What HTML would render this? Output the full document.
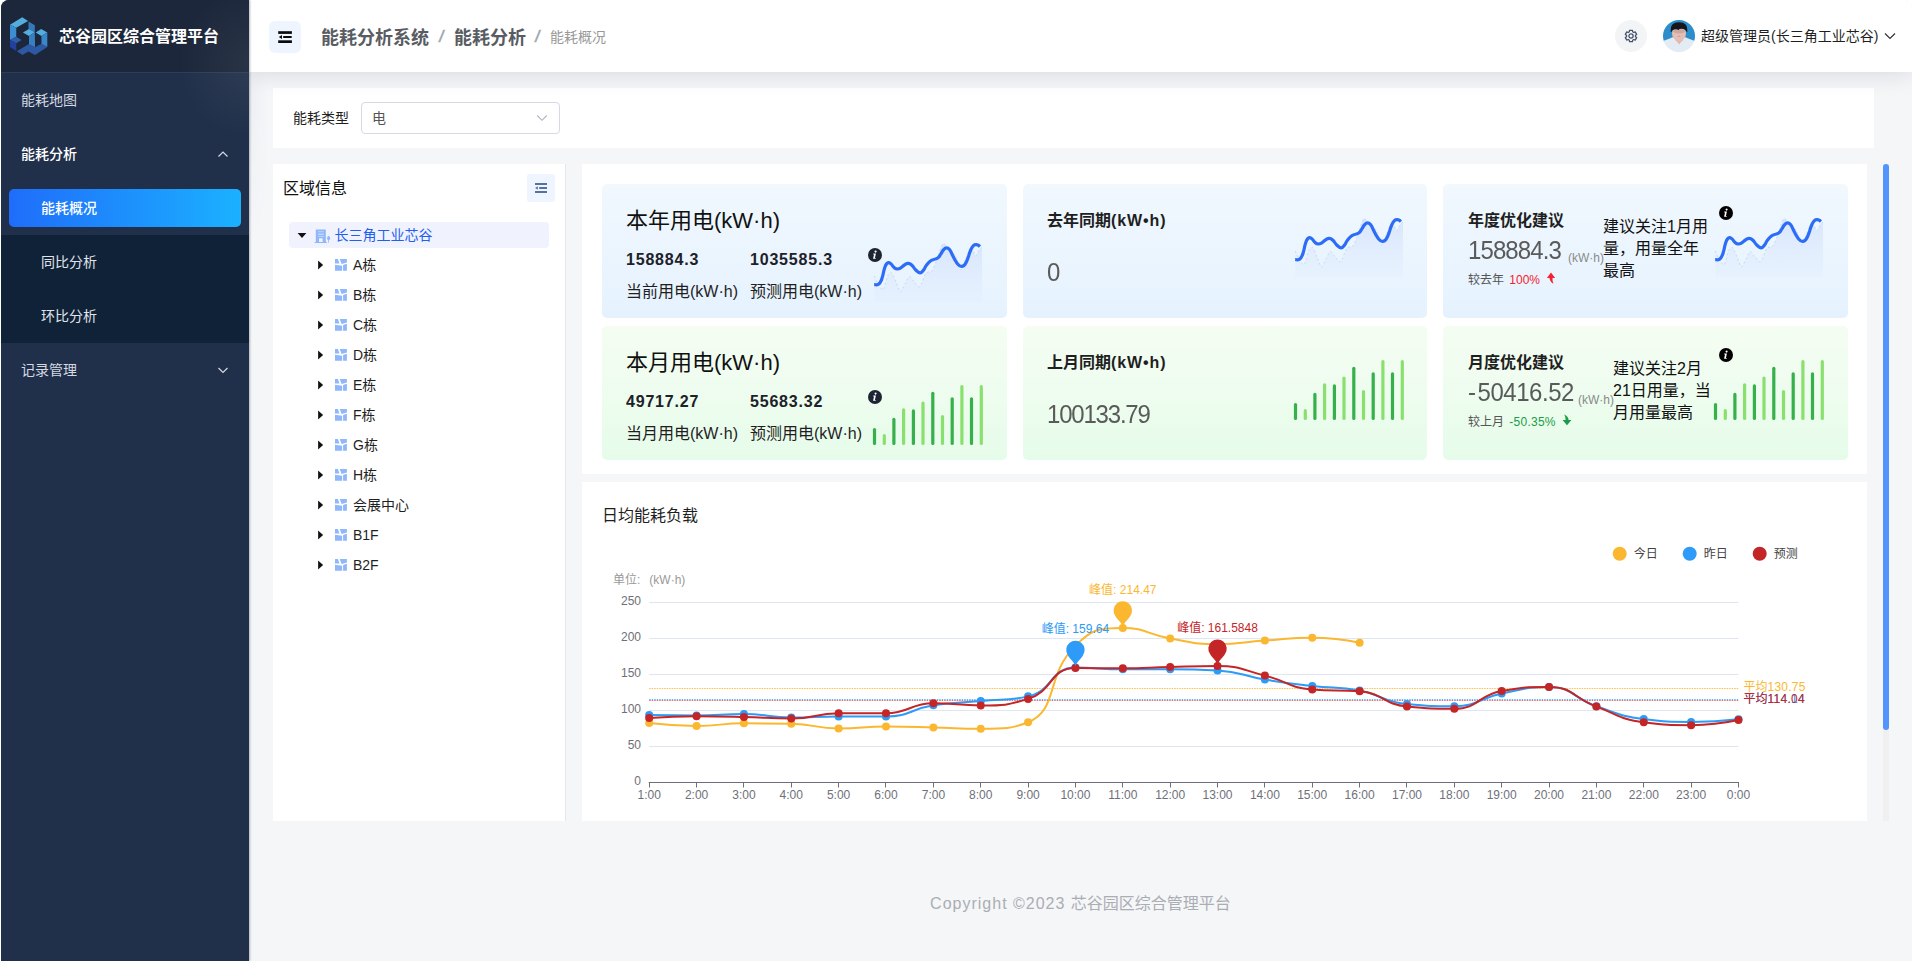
<!DOCTYPE html>
<html lang="zh-CN"><head><meta charset="utf-8"><title>芯谷园区综合管理平台</title>
<style>
*{box-sizing:border-box;margin:0;padding:0}
html,body{width:1912px;height:961px;overflow:hidden;background:#fff}
body{font-family:"Liberation Sans", "Noto Sans CJK SC", sans-serif;font-size:14px;color:#1f1f1f;position:relative}
.abs{position:absolute}
.t{position:absolute;white-space:nowrap;line-height:1}
#app{position:absolute;left:1px;top:0;width:1911px;height:961px;background:#f5f6f8;border-radius:8px 8px 0 0;overflow:hidden}
#side{position:absolute;left:0;top:0;width:248px;height:961px;background:#21304a;box-shadow:1px 0 2px rgba(0,21,41,.3)}
#logo{position:absolute;left:0;top:0;width:248px;height:73px;background:#1c273b;border-bottom:1px solid #2f3c58}
.mi{position:absolute;left:0;width:248px;height:54px;color:#d4d9e2;font-size:14px}
.mi span{position:absolute;top:20px;line-height:14px;white-space:nowrap}
#head{position:absolute;left:248px;top:0;width:1663px;height:72px;background:#fff;box-shadow:0 2px 22px rgba(0,21,41,.13);z-index:5}
#side{z-index:6}
.panel{position:absolute;background:#fff}

.card{position:absolute;border-radius:5px}
.cb{background:linear-gradient(180deg,#f1f8fe 0%,#e5f2fe 100%)}
.cg{background:linear-gradient(180deg,#f5fdf3 0%,#e6fcea 100%)}
.ct1{font-size:22px;line-height:24px;color:#111}
.ct2{font-size:16px;line-height:18px;font-weight:700;color:#1f1f1f}
.cv{font-size:16px;line-height:18px;font-weight:700;color:#1d2129;letter-spacing:.8px}
.cl{font-size:16px;line-height:18px;color:#1f1f1f}
.big{font-size:24px;line-height:26px;color:#5a5a5a;font-weight:300;letter-spacing:-.9px;transform:scaleY(1.1);transform-origin:0 21.3px}
.unit{font-size:12px;line-height:14px;color:#8a8a8a}
.sm{font-size:12px;line-height:14px;color:#555}
.adv{position:absolute;font-size:16px;line-height:22px;color:#111;white-space:nowrap}

.ax{font-size:12px;fill:#6e7079}
</style></head>
<body>
<div id="app">
<div class="abs" style="left:248px;top:72px;width:18px;height:170px;background:linear-gradient(90deg,rgba(0,50,100,.035),rgba(0,50,100,0));-webkit-mask-image:linear-gradient(180deg,#000 20%,transparent);mask-image:linear-gradient(180deg,#000 20%,transparent)"></div>
<div id="side">
<div id="logo">
<svg class="abs" style="left:3px;top:12px" width="50" height="48" viewBox="0 0 1001 961">
<polygon points="120,255 365,105 482,178 245,315" fill="#52aede"/>
<polygon points="120,255 245,315 245,497 120,562" fill="#3c8ed0"/>
<polygon points="120,560 245,495 352,560 245,627" fill="#2f5cab"/>
<polygon points="120,560 245,625 245,782 120,702" fill="#24409f"/>
<polygon points="490,192 617,265 617,405 500,340 490,335" fill="#3579ba"/>
<polygon points="378,410 500,338 617,405 500,482" fill="#52aede"/>
<polygon points="500,480 617,403 622,705 500,650" fill="#3680c2"/>
<polygon points="633,410 745,338 867,410 750,482" fill="#52aede"/>
<polygon points="750,480 867,410 867,702 750,640" fill="#3a86c8"/>
<polygon points="258,785 490,648 622,705 750,635 867,700 622,862 490,790 370,862" fill="#2d58a4"/>
</svg>
<div class="t" style="left:58px;top:28px;font-size:16px;line-height:18px;font-weight:700;color:#fff">芯谷园区综合管理平台</div>
</div>
<div class="abs" style="left:0;top:0;width:248px;height:200px;background:radial-gradient(ellipse 70px 75px at 100% 62px,rgba(255,255,255,.06),rgba(255,255,255,0));pointer-events:none"></div>
<div class="mi" style="top:73px"><span style="left:20px">能耗地图</span></div>
<div class="mi" style="top:127px;color:#fff;font-weight:500"><span style="left:20px">能耗分析</span><svg class="abs" style="left:216px;top:22px" width="12" height="10" viewBox="0 0 12 10"><path d="M1.5 7.5 L6 3 L10.5 7.5" fill="none" stroke="#d4d9e2" stroke-width="1.2"/></svg></div>
<div class="abs" style="left:0;top:235px;width:248px;height:108px;background:#0f2238"></div>
<div class="abs" style="left:8px;top:189px;width:232px;height:38px;border-radius:5px;background:linear-gradient(90deg,#1f6dfa,#1bb1ff)"></div>
<div class="mi" style="top:181px;color:#fff;font-weight:500"><span style="left:40px">能耗概况</span></div>
<div class="mi" style="top:235px;color:#e0e4ea"><span style="left:40px">同比分析</span></div>
<div class="mi" style="top:289px;color:#e0e4ea"><span style="left:40px">环比分析</span></div>
<div class="mi" style="top:343px"><span style="left:20px">记录管理</span><svg class="abs" style="left:216px;top:22px" width="12" height="10" viewBox="0 0 12 10"><path d="M1.5 3 L6 7.5 L10.5 3" fill="none" stroke="#d4d9e2" stroke-width="1.2"/></svg></div>
</div>
<div id="head">
<div class="abs" style="left:20px;top:21px;width:32px;height:32px;border-radius:6px;background:#eef5fe"></div>
<svg class="abs" style="left:28px;top:29px" width="16" height="16" viewBox="0 0 16 16">
<rect x="1.2" y="2.2" width="13.7" height="2.7" fill="#0a0a0a"/><rect x="6.1" y="7" width="8.6" height="1.9" rx=".5" fill="#0a0a0a"/><rect x="1.2" y="11.3" width="13.7" height="2.7" fill="#0a0a0a"/><polygon points="1.8,7.9 5,5.9 5,9.9" fill="#0a0a0a"/></svg>
<div class="t" style="left:72px;top:27.7px;font-size:18px;line-height:20px;font-weight:700;color:#595c63">能耗分析系统</div>
<div class="t" style="left:189.5px;top:27px;font-size:17px;line-height:20px;font-weight:700;color:#a3a9b4;transform:skewX(-12deg)">/</div>
<div class="t" style="left:205px;top:27.7px;font-size:18px;line-height:20px;font-weight:700;color:#595c63">能耗分析</div>
<div class="t" style="left:286px;top:27px;font-size:17px;line-height:20px;font-weight:700;color:#a3a9b4;transform:skewX(-12deg)">/</div>
<div class="t" style="left:301px;top:28.6px;font-size:14px;line-height:16px;color:#999">能耗概况</div>
<div class="abs" style="left:1366px;top:20px;width:32px;height:32px;border-radius:16px;background:#f3f4f6"></div>
<svg class="abs" style="left:1374px;top:28px" width="16" height="16" viewBox="0 0 16 16">
<path d="M6.39 3.80 L6.53 2.29 L9.47 2.29 L9.61 3.80 L10.83 4.50 L12.22 3.87 L13.68 6.41 L12.44 7.30 L12.44 8.70 L13.68 9.59 L12.22 12.13 L10.83 11.50 L9.61 12.20 L9.47 13.71 L6.53 13.71 L6.39 12.20 L5.17 11.50 L3.78 12.13 L2.32 9.59 L3.56 8.70 L3.56 7.30 L2.32 6.41 L3.78 3.87 L5.17 4.50Z" fill="none" stroke="#44526a" stroke-width="1.25" stroke-linejoin="round"/>
<circle cx="8" cy="8" r="2.1" fill="none" stroke="#44526a" stroke-width="1.25"/></svg>
<svg class="abs" style="left:1414px;top:20px;border-radius:50%;overflow:hidden" width="32" height="32" viewBox="0 0 32 32">
<defs><filter id="bl" x="-20%" y="-20%" width="140%" height="140%"><feGaussianBlur stdDeviation=".55"/></filter></defs>
<g><rect width="32" height="22" fill="#2b8ecb"/><rect y="21" width="32" height="11" fill="#e3ecf5"/>
<path d="M-2 34 L-2 21.5 Q5 19.5 10.2 17 L16.3 24.6 L21.8 17 Q27 19.5 34 21.5 L34 34z" fill="#e3ecf5"/>
<g filter="url(#bl)">
<path d="M10.4 17.2 L16.3 24.4 L21.6 17.2 L21.6 14 L10.4 14z" fill="#e2b9a6"/>
<ellipse cx="16" cy="13.6" rx="7" ry="7.3" fill="#e6beb3"/>
<ellipse cx="16" cy="11.2" rx="6" ry="2.2" fill="#b9948d" opacity=".55"/>
<ellipse cx="16" cy="16.4" rx="1.6" ry=".7" fill="#d8949a" opacity=".8"/>
<path d="M7.6 11.5 Q6.8 2.3 16 2.3 Q25.2 2.3 24.4 11.5 Q23.5 12.6 22.9 10.4 Q21 8.2 16.4 9 L15.6 10 Q13 8.3 9.4 10.2 Q8.4 12.8 7.6 11.5z" fill="#15151d"/>
</g></g></svg>
<div class="t" style="left:1452px;top:28px;font-size:14px;line-height:16px;color:#1f1f1f">超级管理员(长三角工业芯谷)</div>
<svg class="abs" style="left:1634px;top:31px" width="14" height="10" viewBox="0 0 14 10"><path d="M2 2.5 L7 7.5 L12 2.5" fill="none" stroke="#333" stroke-width="1.2"/></svg>
</div>
<div class="panel" style="left:272px;top:88px;width:1601px;height:60px">
<div class="t" style="left:20px;top:22px;font-size:14px;line-height:16px;color:#1f1f1f">能耗类型</div>
<div class="abs" style="left:88px;top:14px;width:199px;height:32px;border:1px solid #d5d9e6;border-radius:4px;background:#fff"></div>
<div class="t" style="left:99px;top:22px;font-size:14px;line-height:16px;color:#555">电</div>
<svg class="abs" style="left:263px;top:25px" width="12" height="10" viewBox="0 0 12 10"><path d="M1.2 2.5 L6 7.3 L10.8 2.5" fill="none" stroke="#b0b4bd" stroke-width="1.1"/></svg>
</div>
<div class="panel" style="left:272px;top:164px;width:293px;height:657px;border-right:1px solid #e6e7ea">
<div class="t" style="left:10px;top:16px;font-size:16px;line-height:18px;color:#111">区域信息</div>
<div class="abs" style="left:254px;top:10px;width:28px;height:28px;border-radius:3px;background:#eff5fe"></div>
<svg class="abs" style="left:261px;top:17px" width="14" height="14" viewBox="0 0 14 14">
<rect x="1" y="2" width="12" height="2" fill="#56709f"/><rect x="5.2" y="6" width="7.8" height="2" fill="#56709f"/><rect x="1" y="10" width="12" height="2" fill="#56709f"/><polygon points="1.1,7 3.8,5.2 3.8,8.8" fill="#56709f"/></svg>
<div class="abs" style="left:16px;top:58px;width:260px;height:26px;border-radius:4px;background:#f0f2fe"></div>
<svg class="abs" style="left:24px;top:67px" width="10" height="8" viewBox="0 0 10 8"><polygon points="0.6,2.1 9.4,2.1 5,7.1" fill="#111"/></svg>
<svg class="abs" style="left:40.1px;top:63.5px" width="18" height="18" viewBox="0 0 18 18">
<path d="M2.8 1.9 q0 -.5 .5 -.5 h9 q.5 0 .5 .5 v12.1 h1.1 v.9 h-12.2 v-.9 h1.1z" fill="#8fb7f9"/>
<rect x="5" y="3.3" width="5.8" height=".9" fill="#c4d8fc"/><rect x="5" y="5.7" width="5.8" height=".9" fill="#dfe9fe"/><rect x="5" y="7.9" width="5.8" height=".9" fill="#c4d8fc"/><rect x="6" y="10.3" width="3.6" height="3.7" rx=".5" fill="#f0f2fe"/>
<ellipse cx="15.6" cy="10.2" rx="1.5" ry="2.1" fill="#8fb7f9"/><rect x="15.25" y="10" width=".75" height="4.8" fill="#8fb7f9"/></svg>
<div class="t" style="left:61.5px;top:63px;font-size:14px;line-height:16px;color:#1f5fee">长三角工业芯谷</div>
<svg class="abs" style="left:45px;top:96px" width="8" height="10" viewBox="0 0 8 10"><polygon points="0.1,0.5 5.1,5 0.1,9.5" fill="#111"/></svg>
<svg class="abs" style="left:62px;top:95px" width="12" height="12" viewBox="0 0 12 12">
<path d="M0 0 H2.9 L4.5 4.4 H0z M4.7 0 H11.9 V3.6 L6.6 4.9z M0 5.8 L7.1 6.8 V11.8 H0z M8.1 6 L11.9 4.8 V11.8 H8.1z" fill="#8fb7f9"/></svg>
<div class="t" style="left:80px;top:93px;font-size:14px;line-height:16px;color:#1f1f1f">A栋</div>
<svg class="abs" style="left:45px;top:126px" width="8" height="10" viewBox="0 0 8 10"><polygon points="0.1,0.5 5.1,5 0.1,9.5" fill="#111"/></svg>
<svg class="abs" style="left:62px;top:125px" width="12" height="12" viewBox="0 0 12 12">
<path d="M0 0 H2.9 L4.5 4.4 H0z M4.7 0 H11.9 V3.6 L6.6 4.9z M0 5.8 L7.1 6.8 V11.8 H0z M8.1 6 L11.9 4.8 V11.8 H8.1z" fill="#8fb7f9"/></svg>
<div class="t" style="left:80px;top:123px;font-size:14px;line-height:16px;color:#1f1f1f">B栋</div>
<svg class="abs" style="left:45px;top:156px" width="8" height="10" viewBox="0 0 8 10"><polygon points="0.1,0.5 5.1,5 0.1,9.5" fill="#111"/></svg>
<svg class="abs" style="left:62px;top:155px" width="12" height="12" viewBox="0 0 12 12">
<path d="M0 0 H2.9 L4.5 4.4 H0z M4.7 0 H11.9 V3.6 L6.6 4.9z M0 5.8 L7.1 6.8 V11.8 H0z M8.1 6 L11.9 4.8 V11.8 H8.1z" fill="#8fb7f9"/></svg>
<div class="t" style="left:80px;top:153px;font-size:14px;line-height:16px;color:#1f1f1f">C栋</div>
<svg class="abs" style="left:45px;top:186px" width="8" height="10" viewBox="0 0 8 10"><polygon points="0.1,0.5 5.1,5 0.1,9.5" fill="#111"/></svg>
<svg class="abs" style="left:62px;top:185px" width="12" height="12" viewBox="0 0 12 12">
<path d="M0 0 H2.9 L4.5 4.4 H0z M4.7 0 H11.9 V3.6 L6.6 4.9z M0 5.8 L7.1 6.8 V11.8 H0z M8.1 6 L11.9 4.8 V11.8 H8.1z" fill="#8fb7f9"/></svg>
<div class="t" style="left:80px;top:183px;font-size:14px;line-height:16px;color:#1f1f1f">D栋</div>
<svg class="abs" style="left:45px;top:216px" width="8" height="10" viewBox="0 0 8 10"><polygon points="0.1,0.5 5.1,5 0.1,9.5" fill="#111"/></svg>
<svg class="abs" style="left:62px;top:215px" width="12" height="12" viewBox="0 0 12 12">
<path d="M0 0 H2.9 L4.5 4.4 H0z M4.7 0 H11.9 V3.6 L6.6 4.9z M0 5.8 L7.1 6.8 V11.8 H0z M8.1 6 L11.9 4.8 V11.8 H8.1z" fill="#8fb7f9"/></svg>
<div class="t" style="left:80px;top:213px;font-size:14px;line-height:16px;color:#1f1f1f">E栋</div>
<svg class="abs" style="left:45px;top:246px" width="8" height="10" viewBox="0 0 8 10"><polygon points="0.1,0.5 5.1,5 0.1,9.5" fill="#111"/></svg>
<svg class="abs" style="left:62px;top:245px" width="12" height="12" viewBox="0 0 12 12">
<path d="M0 0 H2.9 L4.5 4.4 H0z M4.7 0 H11.9 V3.6 L6.6 4.9z M0 5.8 L7.1 6.8 V11.8 H0z M8.1 6 L11.9 4.8 V11.8 H8.1z" fill="#8fb7f9"/></svg>
<div class="t" style="left:80px;top:243px;font-size:14px;line-height:16px;color:#1f1f1f">F栋</div>
<svg class="abs" style="left:45px;top:276px" width="8" height="10" viewBox="0 0 8 10"><polygon points="0.1,0.5 5.1,5 0.1,9.5" fill="#111"/></svg>
<svg class="abs" style="left:62px;top:275px" width="12" height="12" viewBox="0 0 12 12">
<path d="M0 0 H2.9 L4.5 4.4 H0z M4.7 0 H11.9 V3.6 L6.6 4.9z M0 5.8 L7.1 6.8 V11.8 H0z M8.1 6 L11.9 4.8 V11.8 H8.1z" fill="#8fb7f9"/></svg>
<div class="t" style="left:80px;top:273px;font-size:14px;line-height:16px;color:#1f1f1f">G栋</div>
<svg class="abs" style="left:45px;top:306px" width="8" height="10" viewBox="0 0 8 10"><polygon points="0.1,0.5 5.1,5 0.1,9.5" fill="#111"/></svg>
<svg class="abs" style="left:62px;top:305px" width="12" height="12" viewBox="0 0 12 12">
<path d="M0 0 H2.9 L4.5 4.4 H0z M4.7 0 H11.9 V3.6 L6.6 4.9z M0 5.8 L7.1 6.8 V11.8 H0z M8.1 6 L11.9 4.8 V11.8 H8.1z" fill="#8fb7f9"/></svg>
<div class="t" style="left:80px;top:303px;font-size:14px;line-height:16px;color:#1f1f1f">H栋</div>
<svg class="abs" style="left:45px;top:336px" width="8" height="10" viewBox="0 0 8 10"><polygon points="0.1,0.5 5.1,5 0.1,9.5" fill="#111"/></svg>
<svg class="abs" style="left:62px;top:335px" width="12" height="12" viewBox="0 0 12 12">
<path d="M0 0 H2.9 L4.5 4.4 H0z M4.7 0 H11.9 V3.6 L6.6 4.9z M0 5.8 L7.1 6.8 V11.8 H0z M8.1 6 L11.9 4.8 V11.8 H8.1z" fill="#8fb7f9"/></svg>
<div class="t" style="left:80px;top:333px;font-size:14px;line-height:16px;color:#1f1f1f">会展中心</div>
<svg class="abs" style="left:45px;top:366px" width="8" height="10" viewBox="0 0 8 10"><polygon points="0.1,0.5 5.1,5 0.1,9.5" fill="#111"/></svg>
<svg class="abs" style="left:62px;top:365px" width="12" height="12" viewBox="0 0 12 12">
<path d="M0 0 H2.9 L4.5 4.4 H0z M4.7 0 H11.9 V3.6 L6.6 4.9z M0 5.8 L7.1 6.8 V11.8 H0z M8.1 6 L11.9 4.8 V11.8 H8.1z" fill="#8fb7f9"/></svg>
<div class="t" style="left:80px;top:363px;font-size:14px;line-height:16px;color:#1f1f1f">B1F</div>
<svg class="abs" style="left:45px;top:396px" width="8" height="10" viewBox="0 0 8 10"><polygon points="0.1,0.5 5.1,5 0.1,9.5" fill="#111"/></svg>
<svg class="abs" style="left:62px;top:395px" width="12" height="12" viewBox="0 0 12 12">
<path d="M0 0 H2.9 L4.5 4.4 H0z M4.7 0 H11.9 V3.6 L6.6 4.9z M0 5.8 L7.1 6.8 V11.8 H0z M8.1 6 L11.9 4.8 V11.8 H8.1z" fill="#8fb7f9"/></svg>
<div class="t" style="left:80px;top:393px;font-size:14px;line-height:16px;color:#1f1f1f">B2F</div>
</div>
<div class="panel" style="left:581px;top:164px;width:1285px;height:310px"></div>
<div class="card cb" style="left:601.00px;top:184px;width:404.67px;height:134px"></div>
<div class="card cb" style="left:1021.67px;top:184px;width:404.67px;height:134px"></div>
<div class="card cb" style="left:1442.33px;top:184px;width:404.67px;height:134px"></div>
<div class="card cg" style="left:601.00px;top:326px;width:404.67px;height:134px"></div>
<div class="card cg" style="left:1021.67px;top:326px;width:404.67px;height:134px"></div>
<div class="card cg" style="left:1442.33px;top:326px;width:404.67px;height:134px"></div>
<div class="t ct1" style="left:625px;top:209px">本年用电(kW·h)</div>
<div class="t cv" style="left:625px;top:251px">158884.3</div>
<div class="t cv" style="left:749px;top:251px">1035585.3</div>
<div class="t cl" style="left:625px;top:283px">当前用电(kW·h)</div>
<div class="t cl" style="left:749px;top:283px">预测用电(kW·h)</div>
<svg class="abs" style="left:866.0px;top:247.0px" width="16" height="16" viewBox="0 0 16 16"><circle cx="8" cy="8" r="7" fill="#1d2433"/><path d="M8.6 3.6 a1 1 0 1 1 -.01 0z M6.3 6.6 h2.6 l-1 4.3 h.9 l-.15 .8 h-2.6 l1 -4.3 h-.9z" fill="#fff"/></svg>
<div class="t ct1" style="left:625px;top:351px">本月用电(kW·h)</div>
<div class="t cv" style="left:625px;top:393px">49717.27</div>
<div class="t cv" style="left:749px;top:393px">55683.32</div>
<div class="t cl" style="left:625px;top:425px">当月用电(kW·h)</div>
<div class="t cl" style="left:749px;top:425px">预测用电(kW·h)</div>
<svg class="abs" style="left:866.0px;top:389.0px" width="16" height="16" viewBox="0 0 16 16"><circle cx="8" cy="8" r="7" fill="#1d2433"/><path d="M8.6 3.6 a1 1 0 1 1 -.01 0z M6.3 6.6 h2.6 l-1 4.3 h.9 l-.15 .8 h-2.6 l1 -4.3 h-.9z" fill="#fff"/></svg>
<svg class="abs" style="left:867.0px;top:236.0px" width="120" height="70" viewBox="868 236 120 70"><defs><linearGradient id="g1" x1="0" y1="0" x2="0" y2="1"><stop offset="0" stop-color="#cfe0fc" stop-opacity=".75"/><stop offset="1" stop-color="#dfeafe" stop-opacity=".25"/></linearGradient></defs><path d="M874.30 276.00 C875.10 277.75 876.49 281.38 877.50 283.00 C878.67 284.88 882.05 290.72 883.00 290.00 C884.68 288.72 886.33 278.44 888.00 275.00 C888.45 274.06 890.92 271.99 891.50 272.50 C892.92 273.74 894.90 279.61 896.00 282.00 C897.15 284.49 899.28 291.73 900.50 292.00 C901.53 292.23 903.85 285.98 905.00 284.00 C906.10 282.11 908.26 276.78 909.50 276.50 C910.51 276.28 912.78 280.72 914.00 282.00 C915.28 283.34 918.52 287.73 919.50 287.00 C921.52 285.48 923.78 275.84 926.00 273.00 C926.91 271.84 931.02 272.08 932.00 271.00 C933.52 269.33 935.09 264.29 936.00 262.00 C937.84 257.41 940.76 246.11 943.00 243.50 C943.76 242.61 946.79 246.84 948.00 248.00 C949.79 249.71 953.80 252.90 955.00 255.00 C956.93 258.40 958.99 269.59 960.50 270.00 C961.74 270.34 964.58 260.98 966.00 258.00 C967.33 255.23 970.18 247.28 971.50 247.00 C972.56 246.78 974.40 255.56 975.50 256.00 C976.28 256.31 977.99 251.40 979.00 250.00 C979.62 249.15 981.25 247.75 982.00 247.00 L982 302 L874.3 302 Z" fill="url(#g1)"/><path d="M874.30 276.00 C875.10 277.75 876.49 281.38 877.50 283.00 C878.67 284.88 882.05 290.72 883.00 290.00 C884.68 288.72 886.33 278.44 888.00 275.00 C888.45 274.06 890.92 271.99 891.50 272.50 C892.92 273.74 894.90 279.61 896.00 282.00 C897.15 284.49 899.28 291.73 900.50 292.00 C901.53 292.23 903.85 285.98 905.00 284.00 C906.10 282.11 908.26 276.78 909.50 276.50 C910.51 276.28 912.78 280.72 914.00 282.00 C915.28 283.34 918.52 287.73 919.50 287.00 C921.52 285.48 923.78 275.84 926.00 273.00 C926.91 271.84 931.02 272.08 932.00 271.00 C933.52 269.33 935.09 264.29 936.00 262.00 C937.84 257.41 940.76 246.11 943.00 243.50 C943.76 242.61 946.79 246.84 948.00 248.00 C949.79 249.71 953.80 252.90 955.00 255.00 C956.93 258.40 958.99 269.59 960.50 270.00 C961.74 270.34 964.58 260.98 966.00 258.00 C967.33 255.23 970.18 247.28 971.50 247.00 C972.56 246.78 974.40 255.56 975.50 256.00 C976.28 256.31 977.99 251.40 979.00 250.00 C979.62 249.15 981.25 247.75 982.00 247.00" fill="none" stroke="#c4d8fb" stroke-width="1" stroke-dasharray="2 2.5"/><path d="M874.15 284.54 C876.02 284.54 876.29 285.18 877.90 284.54 C879.42 283.93 879.53 283.54 880.40 282.04 C881.82 279.58 881.64 279.40 882.48 276.63 C883.72 272.53 883.25 272.37 884.56 268.30 C885.33 265.92 885.22 265.65 886.64 263.72 C887.30 262.82 887.71 262.55 888.73 262.64 C890.00 262.76 890.15 263.18 891.22 264.14 C892.85 265.60 892.46 266.08 894.14 267.47 C895.38 268.50 895.53 268.87 897.05 268.97 C898.86 269.08 899.13 268.82 900.80 267.89 C903.08 266.61 902.71 265.92 904.96 264.55 C906.46 263.63 906.66 263.21 908.29 263.31 C909.99 263.42 910.26 263.76 911.62 264.97 C914.01 267.09 913.45 267.75 915.79 269.97 C917.61 271.70 917.89 272.77 919.95 272.88 C921.64 272.97 921.96 271.95 923.28 270.38 C925.29 267.99 924.67 267.45 926.61 264.97 C928.41 262.67 928.41 262.46 930.77 260.81 C932.57 259.55 932.86 260.00 934.94 259.14 C936.40 258.54 936.68 258.89 937.85 257.89 C939.60 256.39 939.41 256.09 940.77 254.15 C942.33 251.93 941.88 251.50 943.68 249.57 C944.79 248.38 945.13 247.90 946.59 247.90 C948.05 247.90 948.48 248.32 949.51 249.57 C951.39 251.86 950.97 252.27 952.42 254.98 C954.09 258.10 953.85 258.25 955.75 261.22 C957.18 263.46 957.10 263.75 959.08 265.39 C960.23 266.34 960.62 266.59 962.00 266.39 C963.54 266.17 963.94 265.90 964.91 264.55 C966.85 261.86 966.55 261.50 967.83 258.31 C969.47 254.22 968.94 253.98 970.74 249.98 C971.85 247.52 971.84 247.22 973.66 245.40 C974.54 244.52 974.90 244.57 976.15 244.57 C977.40 244.57 977.53 244.78 978.65 245.40 C979.40 245.82 979.27 246.03 979.90 246.65" fill="none" stroke="#2d6cf6" stroke-width="3.2" stroke-linecap="butt" stroke-linejoin="round"/></svg>
<svg class="abs" style="left:867.0px;top:380.0px" width="120" height="70" viewBox="868 380 120 70"><line x1="874.5" y1="429.6" x2="874.5" y2="443.4" stroke="#35b04a" stroke-width="3.2" stroke-linecap="round"/><line x1="884.3" y1="435.7" x2="884.3" y2="443.4" stroke="#8ae06e" stroke-width="3.2" stroke-linecap="round"/><line x1="893.9" y1="419.4" x2="893.9" y2="443.4" stroke="#35b04a" stroke-width="3.2" stroke-linecap="round"/><line x1="903.6" y1="409.8" x2="903.6" y2="443.4" stroke="#8ae06e" stroke-width="3.2" stroke-linecap="round"/><line x1="913.4" y1="410.9" x2="913.4" y2="443.4" stroke="#35b04a" stroke-width="3.2" stroke-linecap="round"/><line x1="923.0" y1="403.0" x2="923.0" y2="443.4" stroke="#8ae06e" stroke-width="3.2" stroke-linecap="round"/><line x1="932.8" y1="393.3" x2="932.8" y2="443.4" stroke="#35b04a" stroke-width="3.2" stroke-linecap="round"/><line x1="942.5" y1="416.7" x2="942.5" y2="443.4" stroke="#8ae06e" stroke-width="3.2" stroke-linecap="round"/><line x1="952.2" y1="398.8" x2="952.2" y2="443.4" stroke="#35b04a" stroke-width="3.2" stroke-linecap="round"/><line x1="961.9" y1="386.6" x2="961.9" y2="443.4" stroke="#8ae06e" stroke-width="3.2" stroke-linecap="round"/><line x1="971.5" y1="398.8" x2="971.5" y2="443.4" stroke="#35b04a" stroke-width="3.2" stroke-linecap="round"/><line x1="981.3" y1="386.6" x2="981.3" y2="443.4" stroke="#8ae06e" stroke-width="3.2" stroke-linecap="round"/></svg>
<div class="t ct2" style="left:1046px;top:212px">去年同期<span style="letter-spacing:.9px">(kW•h)</span></div>
<div class="t big" style="left:1046px;top:260px">0</div>
<div class="t ct2" style="left:1046px;top:354px">上月同期<span style="letter-spacing:.9px">(kW•h)</span></div>
<div class="t big" style="left:1046px;top:402px;letter-spacing:-1.2px">100133.79</div>
<svg class="abs" style="left:1288.0px;top:211.0px" width="120" height="70" viewBox="868 236 120 70"><defs><linearGradient id="g2" x1="0" y1="0" x2="0" y2="1"><stop offset="0" stop-color="#cfe0fc" stop-opacity=".75"/><stop offset="1" stop-color="#dfeafe" stop-opacity=".25"/></linearGradient></defs><path d="M874.30 276.00 C875.10 277.75 876.49 281.38 877.50 283.00 C878.67 284.88 882.05 290.72 883.00 290.00 C884.68 288.72 886.33 278.44 888.00 275.00 C888.45 274.06 890.92 271.99 891.50 272.50 C892.92 273.74 894.90 279.61 896.00 282.00 C897.15 284.49 899.28 291.73 900.50 292.00 C901.53 292.23 903.85 285.98 905.00 284.00 C906.10 282.11 908.26 276.78 909.50 276.50 C910.51 276.28 912.78 280.72 914.00 282.00 C915.28 283.34 918.52 287.73 919.50 287.00 C921.52 285.48 923.78 275.84 926.00 273.00 C926.91 271.84 931.02 272.08 932.00 271.00 C933.52 269.33 935.09 264.29 936.00 262.00 C937.84 257.41 940.76 246.11 943.00 243.50 C943.76 242.61 946.79 246.84 948.00 248.00 C949.79 249.71 953.80 252.90 955.00 255.00 C956.93 258.40 958.99 269.59 960.50 270.00 C961.74 270.34 964.58 260.98 966.00 258.00 C967.33 255.23 970.18 247.28 971.50 247.00 C972.56 246.78 974.40 255.56 975.50 256.00 C976.28 256.31 977.99 251.40 979.00 250.00 C979.62 249.15 981.25 247.75 982.00 247.00 L982 302 L874.3 302 Z" fill="url(#g2)"/><path d="M874.30 276.00 C875.10 277.75 876.49 281.38 877.50 283.00 C878.67 284.88 882.05 290.72 883.00 290.00 C884.68 288.72 886.33 278.44 888.00 275.00 C888.45 274.06 890.92 271.99 891.50 272.50 C892.92 273.74 894.90 279.61 896.00 282.00 C897.15 284.49 899.28 291.73 900.50 292.00 C901.53 292.23 903.85 285.98 905.00 284.00 C906.10 282.11 908.26 276.78 909.50 276.50 C910.51 276.28 912.78 280.72 914.00 282.00 C915.28 283.34 918.52 287.73 919.50 287.00 C921.52 285.48 923.78 275.84 926.00 273.00 C926.91 271.84 931.02 272.08 932.00 271.00 C933.52 269.33 935.09 264.29 936.00 262.00 C937.84 257.41 940.76 246.11 943.00 243.50 C943.76 242.61 946.79 246.84 948.00 248.00 C949.79 249.71 953.80 252.90 955.00 255.00 C956.93 258.40 958.99 269.59 960.50 270.00 C961.74 270.34 964.58 260.98 966.00 258.00 C967.33 255.23 970.18 247.28 971.50 247.00 C972.56 246.78 974.40 255.56 975.50 256.00 C976.28 256.31 977.99 251.40 979.00 250.00 C979.62 249.15 981.25 247.75 982.00 247.00" fill="none" stroke="#c4d8fb" stroke-width="1" stroke-dasharray="2 2.5"/><path d="M874.15 284.54 C876.02 284.54 876.29 285.18 877.90 284.54 C879.42 283.93 879.53 283.54 880.40 282.04 C881.82 279.58 881.64 279.40 882.48 276.63 C883.72 272.53 883.25 272.37 884.56 268.30 C885.33 265.92 885.22 265.65 886.64 263.72 C887.30 262.82 887.71 262.55 888.73 262.64 C890.00 262.76 890.15 263.18 891.22 264.14 C892.85 265.60 892.46 266.08 894.14 267.47 C895.38 268.50 895.53 268.87 897.05 268.97 C898.86 269.08 899.13 268.82 900.80 267.89 C903.08 266.61 902.71 265.92 904.96 264.55 C906.46 263.63 906.66 263.21 908.29 263.31 C909.99 263.42 910.26 263.76 911.62 264.97 C914.01 267.09 913.45 267.75 915.79 269.97 C917.61 271.70 917.89 272.77 919.95 272.88 C921.64 272.97 921.96 271.95 923.28 270.38 C925.29 267.99 924.67 267.45 926.61 264.97 C928.41 262.67 928.41 262.46 930.77 260.81 C932.57 259.55 932.86 260.00 934.94 259.14 C936.40 258.54 936.68 258.89 937.85 257.89 C939.60 256.39 939.41 256.09 940.77 254.15 C942.33 251.93 941.88 251.50 943.68 249.57 C944.79 248.38 945.13 247.90 946.59 247.90 C948.05 247.90 948.48 248.32 949.51 249.57 C951.39 251.86 950.97 252.27 952.42 254.98 C954.09 258.10 953.85 258.25 955.75 261.22 C957.18 263.46 957.10 263.75 959.08 265.39 C960.23 266.34 960.62 266.59 962.00 266.39 C963.54 266.17 963.94 265.90 964.91 264.55 C966.85 261.86 966.55 261.50 967.83 258.31 C969.47 254.22 968.94 253.98 970.74 249.98 C971.85 247.52 971.84 247.22 973.66 245.40 C974.54 244.52 974.90 244.57 976.15 244.57 C977.40 244.57 977.53 244.78 978.65 245.40 C979.40 245.82 979.27 246.03 979.90 246.65" fill="none" stroke="#2d6cf6" stroke-width="3.2" stroke-linecap="butt" stroke-linejoin="round"/></svg>
<svg class="abs" style="left:1288.0px;top:355.0px" width="120" height="70" viewBox="868 380 120 70"><line x1="874.5" y1="429.6" x2="874.5" y2="443.4" stroke="#35b04a" stroke-width="3.2" stroke-linecap="round"/><line x1="884.3" y1="435.7" x2="884.3" y2="443.4" stroke="#8ae06e" stroke-width="3.2" stroke-linecap="round"/><line x1="893.9" y1="419.4" x2="893.9" y2="443.4" stroke="#35b04a" stroke-width="3.2" stroke-linecap="round"/><line x1="903.6" y1="409.8" x2="903.6" y2="443.4" stroke="#8ae06e" stroke-width="3.2" stroke-linecap="round"/><line x1="913.4" y1="410.9" x2="913.4" y2="443.4" stroke="#35b04a" stroke-width="3.2" stroke-linecap="round"/><line x1="923.0" y1="403.0" x2="923.0" y2="443.4" stroke="#8ae06e" stroke-width="3.2" stroke-linecap="round"/><line x1="932.8" y1="393.3" x2="932.8" y2="443.4" stroke="#35b04a" stroke-width="3.2" stroke-linecap="round"/><line x1="942.5" y1="416.7" x2="942.5" y2="443.4" stroke="#8ae06e" stroke-width="3.2" stroke-linecap="round"/><line x1="952.2" y1="398.8" x2="952.2" y2="443.4" stroke="#35b04a" stroke-width="3.2" stroke-linecap="round"/><line x1="961.9" y1="386.6" x2="961.9" y2="443.4" stroke="#8ae06e" stroke-width="3.2" stroke-linecap="round"/><line x1="971.5" y1="398.8" x2="971.5" y2="443.4" stroke="#35b04a" stroke-width="3.2" stroke-linecap="round"/><line x1="981.3" y1="386.6" x2="981.3" y2="443.4" stroke="#8ae06e" stroke-width="3.2" stroke-linecap="round"/></svg>
<div class="t ct2" style="left:1467px;top:212px">年度优化建议</div>
<div class="t big" style="left:1467px;top:238px">158884.3</div>
<div class="t unit" style="left:1567px;top:251px">(kW·h)</div>
<div class="t sm" style="left:1467px;top:272.6px">较去年 <span style="color:#f5222d;margin-left:2px">100%</span></div>
<svg class="abs" style="left:1544px;top:271px" width="12" height="13" viewBox="0 0 12 13"><path d="M6 1.5 L10.1 6.9 H7.5 Q7.2 10 8.5 12.8 Q4.8 10.5 4.5 6.9 H1.9z" fill="#f5222d"/></svg>
<div class="adv" style="left:1602px;top:216px">建议关注1月用<br>量，用量全年<br>最高</div>
<svg class="abs" style="left:1717.0px;top:205.0px" width="16" height="16" viewBox="0 0 16 16"><circle cx="8" cy="8" r="7" fill="#000"/><path d="M8.6 3.6 a1 1 0 1 1 -.01 0z M6.3 6.6 h2.6 l-1 4.3 h.9 l-.15 .8 h-2.6 l1 -4.3 h-.9z" fill="#fff"/></svg>
<svg class="abs" style="left:1708.0px;top:211.0px" width="120" height="70" viewBox="868 236 120 70"><defs><linearGradient id="g3" x1="0" y1="0" x2="0" y2="1"><stop offset="0" stop-color="#cfe0fc" stop-opacity=".75"/><stop offset="1" stop-color="#dfeafe" stop-opacity=".25"/></linearGradient></defs><path d="M874.30 276.00 C875.10 277.75 876.49 281.38 877.50 283.00 C878.67 284.88 882.05 290.72 883.00 290.00 C884.68 288.72 886.33 278.44 888.00 275.00 C888.45 274.06 890.92 271.99 891.50 272.50 C892.92 273.74 894.90 279.61 896.00 282.00 C897.15 284.49 899.28 291.73 900.50 292.00 C901.53 292.23 903.85 285.98 905.00 284.00 C906.10 282.11 908.26 276.78 909.50 276.50 C910.51 276.28 912.78 280.72 914.00 282.00 C915.28 283.34 918.52 287.73 919.50 287.00 C921.52 285.48 923.78 275.84 926.00 273.00 C926.91 271.84 931.02 272.08 932.00 271.00 C933.52 269.33 935.09 264.29 936.00 262.00 C937.84 257.41 940.76 246.11 943.00 243.50 C943.76 242.61 946.79 246.84 948.00 248.00 C949.79 249.71 953.80 252.90 955.00 255.00 C956.93 258.40 958.99 269.59 960.50 270.00 C961.74 270.34 964.58 260.98 966.00 258.00 C967.33 255.23 970.18 247.28 971.50 247.00 C972.56 246.78 974.40 255.56 975.50 256.00 C976.28 256.31 977.99 251.40 979.00 250.00 C979.62 249.15 981.25 247.75 982.00 247.00 L982 302 L874.3 302 Z" fill="url(#g3)"/><path d="M874.30 276.00 C875.10 277.75 876.49 281.38 877.50 283.00 C878.67 284.88 882.05 290.72 883.00 290.00 C884.68 288.72 886.33 278.44 888.00 275.00 C888.45 274.06 890.92 271.99 891.50 272.50 C892.92 273.74 894.90 279.61 896.00 282.00 C897.15 284.49 899.28 291.73 900.50 292.00 C901.53 292.23 903.85 285.98 905.00 284.00 C906.10 282.11 908.26 276.78 909.50 276.50 C910.51 276.28 912.78 280.72 914.00 282.00 C915.28 283.34 918.52 287.73 919.50 287.00 C921.52 285.48 923.78 275.84 926.00 273.00 C926.91 271.84 931.02 272.08 932.00 271.00 C933.52 269.33 935.09 264.29 936.00 262.00 C937.84 257.41 940.76 246.11 943.00 243.50 C943.76 242.61 946.79 246.84 948.00 248.00 C949.79 249.71 953.80 252.90 955.00 255.00 C956.93 258.40 958.99 269.59 960.50 270.00 C961.74 270.34 964.58 260.98 966.00 258.00 C967.33 255.23 970.18 247.28 971.50 247.00 C972.56 246.78 974.40 255.56 975.50 256.00 C976.28 256.31 977.99 251.40 979.00 250.00 C979.62 249.15 981.25 247.75 982.00 247.00" fill="none" stroke="#c4d8fb" stroke-width="1" stroke-dasharray="2 2.5"/><path d="M874.15 284.54 C876.02 284.54 876.29 285.18 877.90 284.54 C879.42 283.93 879.53 283.54 880.40 282.04 C881.82 279.58 881.64 279.40 882.48 276.63 C883.72 272.53 883.25 272.37 884.56 268.30 C885.33 265.92 885.22 265.65 886.64 263.72 C887.30 262.82 887.71 262.55 888.73 262.64 C890.00 262.76 890.15 263.18 891.22 264.14 C892.85 265.60 892.46 266.08 894.14 267.47 C895.38 268.50 895.53 268.87 897.05 268.97 C898.86 269.08 899.13 268.82 900.80 267.89 C903.08 266.61 902.71 265.92 904.96 264.55 C906.46 263.63 906.66 263.21 908.29 263.31 C909.99 263.42 910.26 263.76 911.62 264.97 C914.01 267.09 913.45 267.75 915.79 269.97 C917.61 271.70 917.89 272.77 919.95 272.88 C921.64 272.97 921.96 271.95 923.28 270.38 C925.29 267.99 924.67 267.45 926.61 264.97 C928.41 262.67 928.41 262.46 930.77 260.81 C932.57 259.55 932.86 260.00 934.94 259.14 C936.40 258.54 936.68 258.89 937.85 257.89 C939.60 256.39 939.41 256.09 940.77 254.15 C942.33 251.93 941.88 251.50 943.68 249.57 C944.79 248.38 945.13 247.90 946.59 247.90 C948.05 247.90 948.48 248.32 949.51 249.57 C951.39 251.86 950.97 252.27 952.42 254.98 C954.09 258.10 953.85 258.25 955.75 261.22 C957.18 263.46 957.10 263.75 959.08 265.39 C960.23 266.34 960.62 266.59 962.00 266.39 C963.54 266.17 963.94 265.90 964.91 264.55 C966.85 261.86 966.55 261.50 967.83 258.31 C969.47 254.22 968.94 253.98 970.74 249.98 C971.85 247.52 971.84 247.22 973.66 245.40 C974.54 244.52 974.90 244.57 976.15 244.57 C977.40 244.57 977.53 244.78 978.65 245.40 C979.40 245.82 979.27 246.03 979.90 246.65" fill="none" stroke="#2d6cf6" stroke-width="3.2" stroke-linecap="butt" stroke-linejoin="round"/></svg>
<div class="t ct2" style="left:1467px;top:354px">月度优化建议</div>
<div class="t big" style="left:1467px;top:380px;letter-spacing:-.45px"><span style="letter-spacing:1.5px">-</span>50416.52</div>
<div class="t unit" style="left:1577px;top:393px">(kW·h)</div>
<div class="t sm" style="left:1467px;top:414.6px">较上月 <span style="color:#1a9c48;margin-left:2px;letter-spacing:.25px">-50.35%</span></div>
<svg class="abs" style="left:1560px;top:414px" width="12" height="13" viewBox="0 0 12 13"><path d="M6 11.2 L1.6 5.9 H4.6 Q4.8 3 3.2 .5 Q7.3 2.3 7.6 5.9 H10.4z" fill="#1a9c48"/></svg>
<div class="adv" style="left:1612px;top:358px">建议关注2月<br>21日用量，当<br>月用量最高</div>
<svg class="abs" style="left:1717.0px;top:347.0px" width="16" height="16" viewBox="0 0 16 16"><circle cx="8" cy="8" r="7" fill="#000"/><path d="M8.6 3.6 a1 1 0 1 1 -.01 0z M6.3 6.6 h2.6 l-1 4.3 h.9 l-.15 .8 h-2.6 l1 -4.3 h-.9z" fill="#fff"/></svg>
<svg class="abs" style="left:1708.0px;top:355.0px" width="120" height="70" viewBox="868 380 120 70"><line x1="874.5" y1="429.6" x2="874.5" y2="443.4" stroke="#35b04a" stroke-width="3.2" stroke-linecap="round"/><line x1="884.3" y1="435.7" x2="884.3" y2="443.4" stroke="#8ae06e" stroke-width="3.2" stroke-linecap="round"/><line x1="893.9" y1="419.4" x2="893.9" y2="443.4" stroke="#35b04a" stroke-width="3.2" stroke-linecap="round"/><line x1="903.6" y1="409.8" x2="903.6" y2="443.4" stroke="#8ae06e" stroke-width="3.2" stroke-linecap="round"/><line x1="913.4" y1="410.9" x2="913.4" y2="443.4" stroke="#35b04a" stroke-width="3.2" stroke-linecap="round"/><line x1="923.0" y1="403.0" x2="923.0" y2="443.4" stroke="#8ae06e" stroke-width="3.2" stroke-linecap="round"/><line x1="932.8" y1="393.3" x2="932.8" y2="443.4" stroke="#35b04a" stroke-width="3.2" stroke-linecap="round"/><line x1="942.5" y1="416.7" x2="942.5" y2="443.4" stroke="#8ae06e" stroke-width="3.2" stroke-linecap="round"/><line x1="952.2" y1="398.8" x2="952.2" y2="443.4" stroke="#35b04a" stroke-width="3.2" stroke-linecap="round"/><line x1="961.9" y1="386.6" x2="961.9" y2="443.4" stroke="#8ae06e" stroke-width="3.2" stroke-linecap="round"/><line x1="971.5" y1="398.8" x2="971.5" y2="443.4" stroke="#35b04a" stroke-width="3.2" stroke-linecap="round"/><line x1="981.3" y1="386.6" x2="981.3" y2="443.4" stroke="#8ae06e" stroke-width="3.2" stroke-linecap="round"/></svg>
<div class="panel" style="left:581px;top:482px;width:1285px;height:339px"></div>
<div class="t" style="left:601px;top:506.5px;font-size:16px;line-height:18px;color:#1f1f1f">日均能耗负载</div>
<svg class="abs" style="left:0;top:0" width="1911" height="961" viewBox="0 0 1911 961" font-family="'Liberation Sans', 'Noto Sans CJK SC', sans-serif">
<line x1="648.2" y1="746.5" x2="1737.5" y2="746.5" stroke="#e0e6f1" stroke-width="1"/>
<line x1="648.2" y1="710.5" x2="1737.5" y2="710.5" stroke="#e0e6f1" stroke-width="1"/>
<line x1="648.2" y1="674.5" x2="1737.5" y2="674.5" stroke="#e0e6f1" stroke-width="1"/>
<line x1="648.2" y1="638.5" x2="1737.5" y2="638.5" stroke="#e0e6f1" stroke-width="1"/>
<line x1="648.2" y1="602.5" x2="1737.5" y2="602.5" stroke="#e0e6f1" stroke-width="1"/>
<text class="ax" x="640.0" y="785.0" text-anchor="end">0</text>
<text class="ax" x="640.0" y="749.0" text-anchor="end">50</text>
<text class="ax" x="640.0" y="713.0" text-anchor="end">100</text>
<text class="ax" x="640.0" y="677.0" text-anchor="end">150</text>
<text class="ax" x="640.0" y="641.0" text-anchor="end">200</text>
<text class="ax" x="640.0" y="605.0" text-anchor="end">250</text>
<text x="612" y="583.5" font-size="12" fill="#999">单位:<tspan dx="9">(kW·h)</tspan></text>
<line x1="648.2" y1="688.5" x2="1737.5" y2="688.5" stroke="#fbb730" stroke-width="1" stroke-dasharray="1.5 1" opacity=".85"/>
<line x1="648.2" y1="699.5" x2="1737.5" y2="699.5" stroke="#2d9bf7" stroke-width="1" stroke-dasharray="1.5 1" opacity=".7"/>
<line x1="648.2" y1="700.5" x2="1737.5" y2="700.5" stroke="#c42526" stroke-width="1" stroke-dasharray="1.5 1" opacity=".65"/>
<text x="1742.5" y="690.5" font-size="12" fill="#fbb730">平均<tspan letter-spacing=".25">130.75</tspan></text>
<text x="1742.5" y="702.5" font-size="12" fill="#2d9bf7">平均<tspan letter-spacing=".25">114.14</tspan></text>
<text x="1742.5" y="702.5" font-size="12" fill="#c42526">平均<tspan letter-spacing=".25">114.04</tspan></text>
<line x1="647.7" y1="782.5" x2="1738.0" y2="782.5" stroke="#6e7079" stroke-width="1"/>
<line x1="648.5" y1="782.5" x2="648.5" y2="787.5" stroke="#6e7079" stroke-width="1"/>
<text class="ax" x="648.2" y="798.5" text-anchor="middle">1:00</text>
<line x1="695.5" y1="782.5" x2="695.5" y2="787.5" stroke="#6e7079" stroke-width="1"/>
<text class="ax" x="695.6" y="798.5" text-anchor="middle">2:00</text>
<line x1="742.5" y1="782.5" x2="742.5" y2="787.5" stroke="#6e7079" stroke-width="1"/>
<text class="ax" x="742.9" y="798.5" text-anchor="middle">3:00</text>
<line x1="790.5" y1="782.5" x2="790.5" y2="787.5" stroke="#6e7079" stroke-width="1"/>
<text class="ax" x="790.3" y="798.5" text-anchor="middle">4:00</text>
<line x1="837.5" y1="782.5" x2="837.5" y2="787.5" stroke="#6e7079" stroke-width="1"/>
<text class="ax" x="837.6" y="798.5" text-anchor="middle">5:00</text>
<line x1="884.5" y1="782.5" x2="884.5" y2="787.5" stroke="#6e7079" stroke-width="1"/>
<text class="ax" x="885.0" y="798.5" text-anchor="middle">6:00</text>
<line x1="932.5" y1="782.5" x2="932.5" y2="787.5" stroke="#6e7079" stroke-width="1"/>
<text class="ax" x="932.4" y="798.5" text-anchor="middle">7:00</text>
<line x1="979.5" y1="782.5" x2="979.5" y2="787.5" stroke="#6e7079" stroke-width="1"/>
<text class="ax" x="979.7" y="798.5" text-anchor="middle">8:00</text>
<line x1="1027.5" y1="782.5" x2="1027.5" y2="787.5" stroke="#6e7079" stroke-width="1"/>
<text class="ax" x="1027.1" y="798.5" text-anchor="middle">9:00</text>
<line x1="1074.5" y1="782.5" x2="1074.5" y2="787.5" stroke="#6e7079" stroke-width="1"/>
<text class="ax" x="1074.4" y="798.5" text-anchor="middle">10:00</text>
<line x1="1121.5" y1="782.5" x2="1121.5" y2="787.5" stroke="#6e7079" stroke-width="1"/>
<text class="ax" x="1121.8" y="798.5" text-anchor="middle">11:00</text>
<line x1="1169.5" y1="782.5" x2="1169.5" y2="787.5" stroke="#6e7079" stroke-width="1"/>
<text class="ax" x="1169.2" y="798.5" text-anchor="middle">12:00</text>
<line x1="1216.5" y1="782.5" x2="1216.5" y2="787.5" stroke="#6e7079" stroke-width="1"/>
<text class="ax" x="1216.5" y="798.5" text-anchor="middle">13:00</text>
<line x1="1263.5" y1="782.5" x2="1263.5" y2="787.5" stroke="#6e7079" stroke-width="1"/>
<text class="ax" x="1263.9" y="798.5" text-anchor="middle">14:00</text>
<line x1="1311.5" y1="782.5" x2="1311.5" y2="787.5" stroke="#6e7079" stroke-width="1"/>
<text class="ax" x="1311.2" y="798.5" text-anchor="middle">15:00</text>
<line x1="1358.5" y1="782.5" x2="1358.5" y2="787.5" stroke="#6e7079" stroke-width="1"/>
<text class="ax" x="1358.6" y="798.5" text-anchor="middle">16:00</text>
<line x1="1405.5" y1="782.5" x2="1405.5" y2="787.5" stroke="#6e7079" stroke-width="1"/>
<text class="ax" x="1406.0" y="798.5" text-anchor="middle">17:00</text>
<line x1="1453.5" y1="782.5" x2="1453.5" y2="787.5" stroke="#6e7079" stroke-width="1"/>
<text class="ax" x="1453.3" y="798.5" text-anchor="middle">18:00</text>
<line x1="1500.5" y1="782.5" x2="1500.5" y2="787.5" stroke="#6e7079" stroke-width="1"/>
<text class="ax" x="1500.7" y="798.5" text-anchor="middle">19:00</text>
<line x1="1548.5" y1="782.5" x2="1548.5" y2="787.5" stroke="#6e7079" stroke-width="1"/>
<text class="ax" x="1548.0" y="798.5" text-anchor="middle">20:00</text>
<line x1="1595.5" y1="782.5" x2="1595.5" y2="787.5" stroke="#6e7079" stroke-width="1"/>
<text class="ax" x="1595.4" y="798.5" text-anchor="middle">21:00</text>
<line x1="1642.5" y1="782.5" x2="1642.5" y2="787.5" stroke="#6e7079" stroke-width="1"/>
<text class="ax" x="1642.8" y="798.5" text-anchor="middle">22:00</text>
<line x1="1690.5" y1="782.5" x2="1690.5" y2="787.5" stroke="#6e7079" stroke-width="1"/>
<text class="ax" x="1690.1" y="798.5" text-anchor="middle">23:00</text>
<line x1="1737.5" y1="782.5" x2="1737.5" y2="787.5" stroke="#6e7079" stroke-width="1"/>
<text class="ax" x="1737.5" y="798.5" text-anchor="middle">0:00</text>
<path d="M648.20 723.00 C648.20 723.00 671.87 725.88 695.56 725.88 C719.23 725.88 719.22 723.36 742.92 723.36 C766.58 723.36 766.66 723.36 790.28 723.72 C814.02 724.08 813.91 728.40 837.64 728.40 C861.27 728.40 861.31 726.60 885.00 726.60 C908.67 726.60 908.68 726.83 932.36 727.39 C956.04 727.95 956.15 728.83 979.72 728.83 C1003.51 728.83 1010.66 728.83 1027.08 722.28 C1058.02 709.93 1044.09 675.81 1074.44 645.60 C1091.45 628.66 1097.63 627.98 1121.80 627.98 C1144.99 627.98 1145.29 634.32 1169.16 638.40 C1192.65 642.41 1192.79 644.16 1216.52 644.16 C1240.15 644.16 1240.19 642.18 1263.88 640.56 C1287.55 638.94 1287.60 637.68 1311.24 637.68 C1334.96 637.68 1358.60 642.72 1358.60 642.72" fill="none" stroke="#fbb730" stroke-width="2" stroke-linejoin="round"/>
<circle cx="648.20" cy="723.00" r="4" fill="#fbb730"/>
<circle cx="695.56" cy="725.88" r="4" fill="#fbb730"/>
<circle cx="742.92" cy="723.36" r="4" fill="#fbb730"/>
<circle cx="790.28" cy="723.72" r="4" fill="#fbb730"/>
<circle cx="837.64" cy="728.40" r="4" fill="#fbb730"/>
<circle cx="885.00" cy="726.60" r="4" fill="#fbb730"/>
<circle cx="932.36" cy="727.39" r="4" fill="#fbb730"/>
<circle cx="979.72" cy="728.83" r="4" fill="#fbb730"/>
<circle cx="1027.08" cy="722.28" r="4" fill="#fbb730"/>
<circle cx="1074.44" cy="645.60" r="4" fill="#fbb730"/>
<circle cx="1121.80" cy="627.98" r="4" fill="#fbb730"/>
<circle cx="1169.16" cy="638.40" r="4" fill="#fbb730"/>
<circle cx="1216.52" cy="644.16" r="4" fill="#fbb730"/>
<circle cx="1263.88" cy="640.56" r="4" fill="#fbb730"/>
<circle cx="1311.24" cy="637.68" r="4" fill="#fbb730"/>
<circle cx="1358.60" cy="642.72" r="4" fill="#fbb730"/>
<path d="M648.20 715.01 C648.20 715.01 671.88 715.44 695.56 715.44 C719.24 715.44 719.27 714.00 742.92 714.00 C766.63 714.00 766.57 717.60 790.28 717.60 C813.93 717.60 813.96 716.52 837.64 716.52 C861.32 716.52 861.64 716.52 885.00 716.52 C909.00 716.52 908.41 709.27 932.36 705.36 C955.77 701.53 956.05 703.29 979.72 701.04 C1003.41 698.79 1005.21 701.04 1027.08 696.36 C1052.57 690.90 1048.90 667.46 1074.44 667.46 C1096.26 667.46 1098.11 669.36 1121.80 669.36 C1145.47 669.36 1145.48 669.36 1169.16 669.36 C1192.84 669.36 1193.05 669.36 1216.52 670.44 C1240.41 671.54 1240.09 675.70 1263.88 679.58 C1287.45 683.44 1287.51 683.18 1311.24 685.92 C1334.87 688.65 1335.33 686.07 1358.60 690.53 C1382.69 695.14 1381.83 701.82 1405.96 704.06 C1429.19 706.22 1430.04 706.22 1453.32 706.22 C1477.40 706.22 1476.70 698.35 1500.68 693.48 C1524.06 688.74 1525.15 687.00 1548.04 687.00 C1572.51 687.00 1571.24 698.05 1595.40 706.22 C1618.60 714.07 1618.68 716.06 1642.76 719.04 C1666.04 721.92 1666.44 721.92 1690.12 721.92 C1713.80 721.92 1737.48 719.33 1737.48 719.33" fill="none" stroke="#2d9bf7" stroke-width="2" stroke-linejoin="round"/>
<circle cx="648.20" cy="715.01" r="4" fill="#2d9bf7"/>
<circle cx="695.56" cy="715.44" r="4" fill="#2d9bf7"/>
<circle cx="742.92" cy="714.00" r="4" fill="#2d9bf7"/>
<circle cx="790.28" cy="717.60" r="4" fill="#2d9bf7"/>
<circle cx="837.64" cy="716.52" r="4" fill="#2d9bf7"/>
<circle cx="885.00" cy="716.52" r="4" fill="#2d9bf7"/>
<circle cx="932.36" cy="705.36" r="4" fill="#2d9bf7"/>
<circle cx="979.72" cy="701.04" r="4" fill="#2d9bf7"/>
<circle cx="1027.08" cy="696.36" r="4" fill="#2d9bf7"/>
<circle cx="1074.44" cy="667.46" r="4" fill="#2d9bf7"/>
<circle cx="1121.80" cy="669.36" r="4" fill="#2d9bf7"/>
<circle cx="1169.16" cy="669.36" r="4" fill="#2d9bf7"/>
<circle cx="1216.52" cy="670.44" r="4" fill="#2d9bf7"/>
<circle cx="1263.88" cy="679.58" r="4" fill="#2d9bf7"/>
<circle cx="1311.24" cy="685.92" r="4" fill="#2d9bf7"/>
<circle cx="1358.60" cy="690.53" r="4" fill="#2d9bf7"/>
<circle cx="1405.96" cy="704.06" r="4" fill="#2d9bf7"/>
<circle cx="1453.32" cy="706.22" r="4" fill="#2d9bf7"/>
<circle cx="1500.68" cy="693.48" r="4" fill="#2d9bf7"/>
<circle cx="1548.04" cy="687.00" r="4" fill="#2d9bf7"/>
<circle cx="1595.40" cy="706.22" r="4" fill="#2d9bf7"/>
<circle cx="1642.76" cy="719.04" r="4" fill="#2d9bf7"/>
<circle cx="1690.12" cy="721.92" r="4" fill="#2d9bf7"/>
<circle cx="1737.48" cy="719.33" r="4" fill="#2d9bf7"/>
<path d="M648.20 717.89 C648.20 717.89 671.87 716.16 695.56 716.16 C719.23 716.16 719.25 716.27 742.92 716.88 C766.61 717.49 766.67 718.61 790.28 718.61 C814.03 718.61 813.89 713.28 837.64 713.28 C861.25 713.28 861.58 713.28 885.00 713.28 C908.94 713.28 908.43 703.20 932.36 703.20 C955.79 703.20 956.14 705.50 979.72 705.50 C1003.50 705.50 1005.39 705.50 1027.08 698.88 C1052.75 691.04 1048.66 667.92 1074.44 667.92 C1096.02 667.92 1098.12 668.35 1121.80 668.35 C1145.48 668.35 1145.48 667.48 1169.16 666.91 C1192.84 666.34 1193.07 666.06 1216.52 666.06 C1240.43 666.06 1240.45 669.82 1263.88 675.62 C1287.81 681.55 1287.08 687.65 1311.24 689.52 C1334.44 691.32 1335.50 689.52 1358.60 691.32 C1382.86 693.21 1381.71 704.24 1405.96 706.58 C1429.07 708.82 1430.41 708.82 1453.32 708.82 C1477.77 708.82 1476.25 695.18 1500.68 690.96 C1523.61 687.00 1525.25 687.00 1548.04 687.00 C1572.61 687.00 1571.40 697.65 1595.40 706.58 C1618.76 715.29 1618.49 719.25 1642.76 722.28 C1665.85 725.16 1666.49 725.16 1690.12 725.16 C1713.85 725.16 1737.48 720.05 1737.48 720.05" fill="none" stroke="#c42526" stroke-width="2" stroke-linejoin="round"/>
<circle cx="648.20" cy="717.89" r="4" fill="#c42526"/>
<circle cx="695.56" cy="716.16" r="4" fill="#c42526"/>
<circle cx="742.92" cy="716.88" r="4" fill="#c42526"/>
<circle cx="790.28" cy="718.61" r="4" fill="#c42526"/>
<circle cx="837.64" cy="713.28" r="4" fill="#c42526"/>
<circle cx="885.00" cy="713.28" r="4" fill="#c42526"/>
<circle cx="932.36" cy="703.20" r="4" fill="#c42526"/>
<circle cx="979.72" cy="705.50" r="4" fill="#c42526"/>
<circle cx="1027.08" cy="698.88" r="4" fill="#c42526"/>
<circle cx="1074.44" cy="667.92" r="4" fill="#c42526"/>
<circle cx="1121.80" cy="668.35" r="4" fill="#c42526"/>
<circle cx="1169.16" cy="666.91" r="4" fill="#c42526"/>
<circle cx="1216.52" cy="666.06" r="4" fill="#c42526"/>
<circle cx="1263.88" cy="675.62" r="4" fill="#c42526"/>
<circle cx="1311.24" cy="689.52" r="4" fill="#c42526"/>
<circle cx="1358.60" cy="691.32" r="4" fill="#c42526"/>
<circle cx="1405.96" cy="706.58" r="4" fill="#c42526"/>
<circle cx="1453.32" cy="708.82" r="4" fill="#c42526"/>
<circle cx="1500.68" cy="690.96" r="4" fill="#c42526"/>
<circle cx="1548.04" cy="687.00" r="4" fill="#c42526"/>
<circle cx="1595.40" cy="706.58" r="4" fill="#c42526"/>
<circle cx="1642.76" cy="722.28" r="4" fill="#c42526"/>
<circle cx="1690.12" cy="725.16" r="4" fill="#c42526"/>
<circle cx="1737.48" cy="720.05" r="4" fill="#c42526"/>
<path d="M1121.80 626.48 C1120.30 621.98 1115.80 618.98 1114.20 615.68 A9.20 9.20 0 1 1 1129.40 615.68 C1127.80 618.98 1123.30 621.98 1121.80 626.48 Z" fill="#fbb730"/>
<path d="M1074.44 665.96 C1072.94 661.46 1068.44 658.46 1066.84 655.16 A9.20 9.20 0 1 1 1082.04 655.16 C1080.44 658.46 1075.94 661.46 1074.44 665.96 Z" fill="#2d9bf7"/>
<path d="M1216.52 664.56 C1215.02 660.06 1210.52 657.06 1208.92 653.76 A9.20 9.20 0 1 1 1224.12 653.76 C1222.52 657.06 1218.02 660.06 1216.52 664.56 Z" fill="#c42526"/>
<text x="1121.8" y="593.5" font-size="12" fill="#fbb730" text-anchor="middle">峰值: 214.47</text>
<text x="1074.4" y="632.5" font-size="12" fill="#2d9bf7" text-anchor="middle">峰值: 159.64</text>
<text x="1216.5" y="631.5" font-size="12" fill="#c42526" text-anchor="middle">峰值: 161.5848</text>
<circle cx="1618.7" cy="553.8" r="7" fill="#fbb730"/>
<text x="1632.7" y="557.8" font-size="12" fill="#444">今日</text>
<circle cx="1688.7" cy="553.8" r="7" fill="#2d9bf7"/>
<text x="1702.7" y="557.8" font-size="12" fill="#444">昨日</text>
<circle cx="1758.7" cy="553.8" r="7" fill="#c42526"/>
<text x="1772.7" y="557.8" font-size="12" fill="#444">预测</text>
</svg>
<div class="abs" style="left:1882px;top:164px;width:6px;height:657px;background:#f0f0f1"></div>
<div class="abs" style="left:1882px;top:164px;width:6px;height:566px;border-radius:3px;background:#5394fc"></div>
<div class="t" style="left:248px;width:1663px;text-align:center;top:894.5px;font-size:16px;line-height:18px;color:#aaadb3"><span style="letter-spacing:1px">Copyright ©2023 </span>芯谷园区综合管理平台</div>
</div>
</body></html>
